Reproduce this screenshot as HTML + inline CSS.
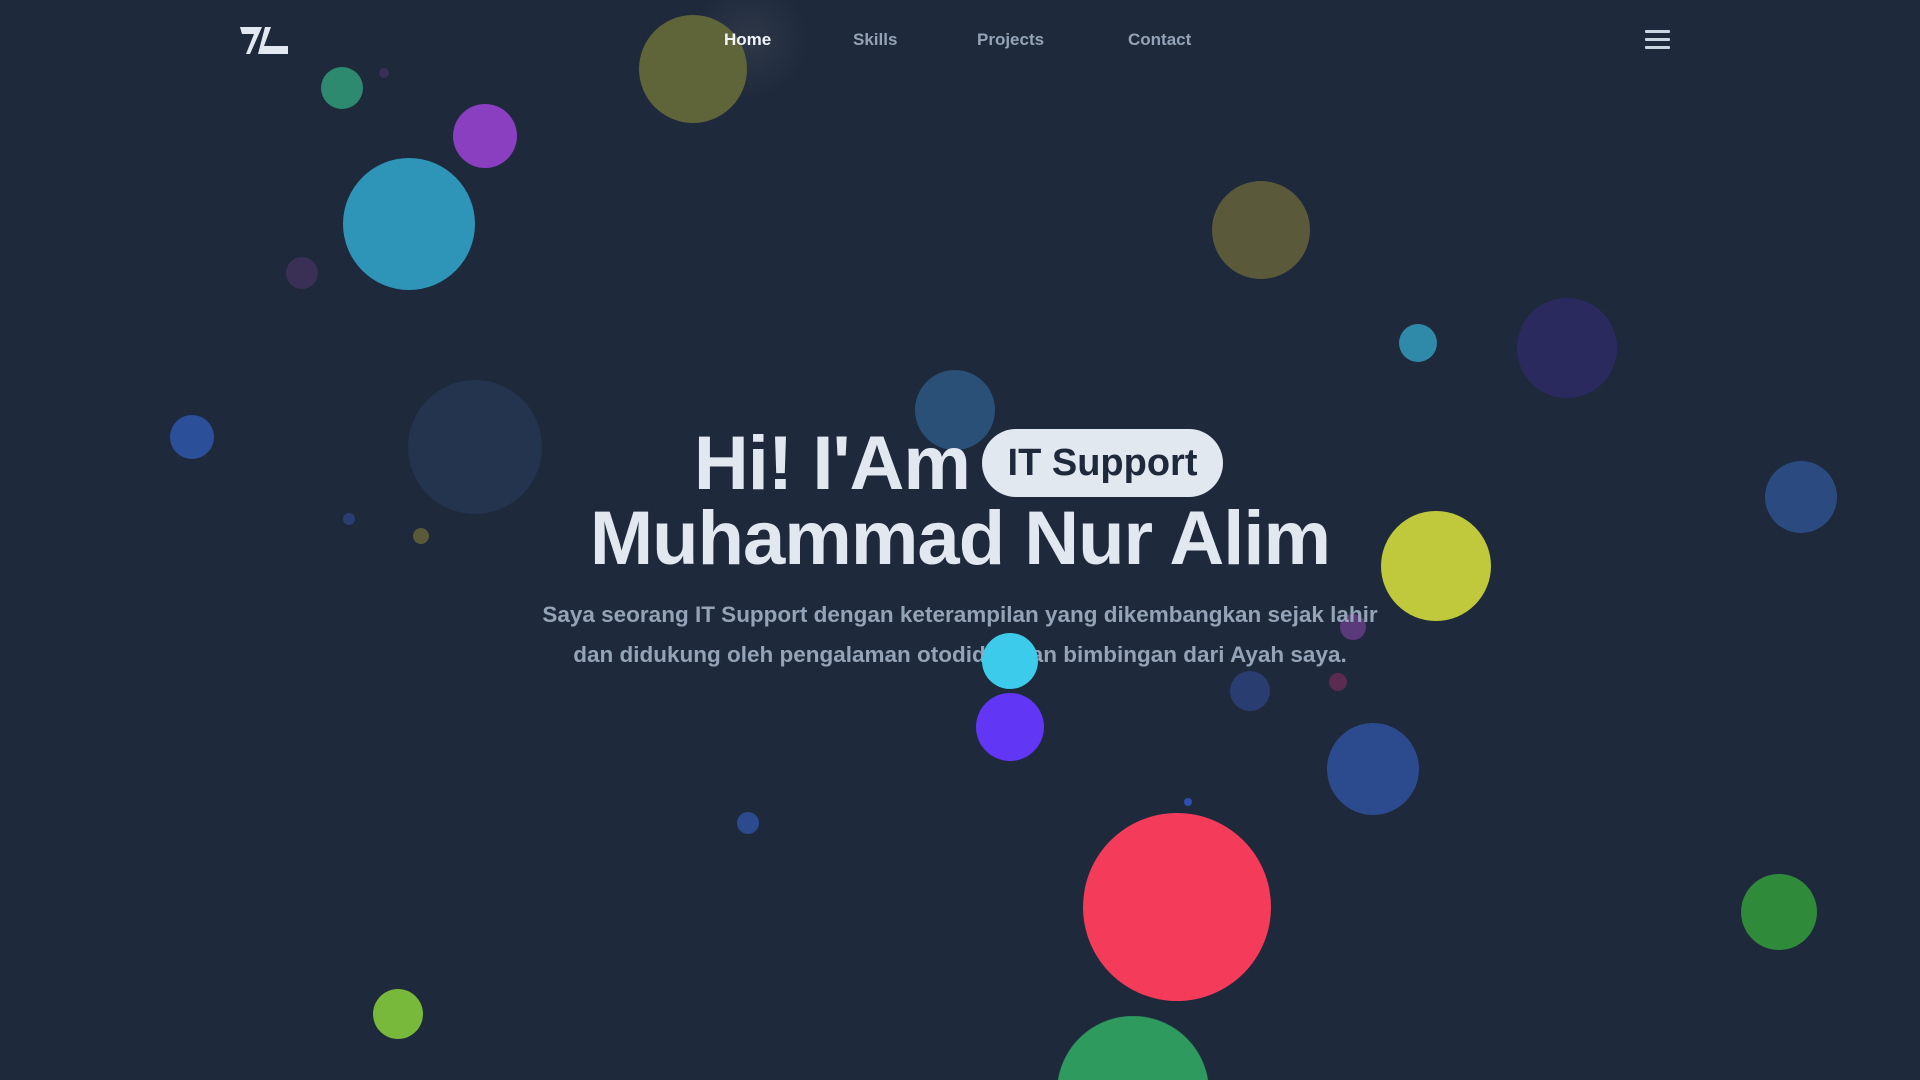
<!DOCTYPE html>
<html><head><meta charset="utf-8"><style>
*{margin:0;padding:0;box-sizing:border-box}
html,body{width:1920px;height:1080px;overflow:hidden;background:#1e293b;font-family:"Liberation Sans",sans-serif}
#w{position:relative;width:1920px;height:1080px;overflow:hidden}
.c{position:absolute;border-radius:50%}
.nav a{position:absolute;top:30px;font-size:17px;font-weight:bold;color:#94a3b8;text-decoration:none}
.h{position:absolute;left:0;width:1920px;text-align:center;color:#e2e8f0;font-weight:bold;font-size:76px;letter-spacing:-1px}
.p{position:absolute;left:0;width:1920px;text-align:center;color:#94a3b8;font-weight:bold;font-size:22.5px}
</style></head><body><div id="w">
<div class="c" style="left:690px;top:-20px;width:120px;height:120px;background:radial-gradient(circle,rgba(255,255,255,0.07),rgba(255,255,255,0) 70%)"></div>
<div class="c" style="left:639px;top:15px;width:108px;height:108px;background:#5f6538"></div>
<div class="c" style="left:321px;top:67px;width:42px;height:42px;background:#2d8a6e"></div>
<div class="c" style="left:453px;top:104px;width:64px;height:64px;background:#8a3fc0"></div>
<div class="c" style="left:343px;top:158px;width:132px;height:132px;background:#2e94b8"></div>
<div class="c" style="left:286px;top:257px;width:32px;height:32px;background:#3a2f55"></div>
<div class="c" style="left:379px;top:68px;width:10px;height:10px;background:#3a2f55"></div>
<div class="c" style="left:170px;top:415px;width:44px;height:44px;background:#2c4f9a"></div>
<div class="c" style="left:408px;top:380px;width:134px;height:134px;background:#24334e"></div>
<div class="c" style="left:413px;top:528px;width:16px;height:16px;background:#5a5a3a"></div>
<div class="c" style="left:343px;top:513px;width:12px;height:12px;background:#2a3d70"></div>
<div class="c" style="left:915px;top:370px;width:80px;height:80px;background:#2b5078"></div>
<div class="c" style="left:1212px;top:181px;width:98px;height:98px;background:#5a5a3a"></div>
<div class="c" style="left:1399px;top:324px;width:38px;height:38px;background:#2e8aa8"></div>
<div class="c" style="left:1517px;top:298px;width:100px;height:100px;background:#2b2a5e"></div>
<div class="c" style="left:1765px;top:461px;width:72px;height:72px;background:#2b4b80"></div>
<div class="c" style="left:1381px;top:511px;width:110px;height:110px;background:#bfc93b"></div>
<div class="c" style="left:1340px;top:614px;width:26px;height:26px;background:#5a3a7a"></div>
<div class="c" style="left:1329px;top:673px;width:18px;height:18px;background:#5a2d50"></div>
<div class="c" style="left:1230px;top:671px;width:40px;height:40px;background:#2a3d70"></div>
<div class="c" style="left:1327px;top:723px;width:92px;height:92px;background:#2c4a8e"></div>
<div class="c" style="left:737px;top:812px;width:22px;height:22px;background:#2c4a8e"></div>
<div class="c" style="left:1184px;top:798px;width:8px;height:8px;background:#2c4fb0"></div>
<div class="c" style="left:1083px;top:813px;width:188px;height:188px;background:#f43c5a"></div>
<div style="position:absolute;left:1057px;top:1016px;width:152px;height:64px;background:radial-gradient(circle at 76px 76px,#2e9a5e 75.5px,rgba(46,154,94,0) 76.5px)"></div>
<div class="c" style="left:1741px;top:874px;width:76px;height:76px;background:#2f8a3a"></div>
<div class="c" style="left:373px;top:989px;width:50px;height:50px;background:#78b83a"></div>

<svg style="position:absolute;left:240px;top:27px" width="48" height="27" viewBox="0 0 48 27"><polygon points="0,0 22,0 10,27 6,27 14,7 2,7" fill="#e2e8f0"/><polygon points="25,0 31,0 24,19 48,19 48,27 18,27" fill="#e2e8f0"/></svg>
<div class="nav"><a style="left:724px;color:#f1f5f9">Home</a><a style="left:853px">Skills</a><a style="left:977px">Projects</a><a style="left:1128px">Contact</a></div>
<div style="position:absolute;left:1645px;top:30px;width:25px;height:3px;background:#cbd5e1;border-radius:1px"></div>
<div style="position:absolute;left:1645px;top:38px;width:25px;height:3px;background:#cbd5e1;border-radius:1px"></div>
<div style="position:absolute;left:1645px;top:46px;width:25px;height:3px;background:#cbd5e1;border-radius:1px"></div>

<div class="h" style="top:420px;width:970px;text-align:right">Hi! I'Am</div>
<div style="position:absolute;left:982px;top:429px;width:241px;height:68px;border-radius:34px;background:#e2e8f0;color:#1e293b;font-weight:bold;font-size:38px;text-align:center;line-height:68px">IT Support</div>
<div class="h" style="top:495px;left:0">Muhammad Nur Alim</div>
<div class="p" style="top:602px">Saya seorang IT Support dengan keterampilan yang dikembangkan sejak lahir</div>
<div class="p" style="top:642px">dan didukung oleh pengalaman otodidak dan bimbingan dari Ayah saya.</div>

<div class="c" style="left:982px;top:633px;width:56px;height:56px;background:#3ccbea"></div>
<div class="c" style="left:976px;top:693px;width:68px;height:68px;background:#6236f5"></div>
</div></body></html>
